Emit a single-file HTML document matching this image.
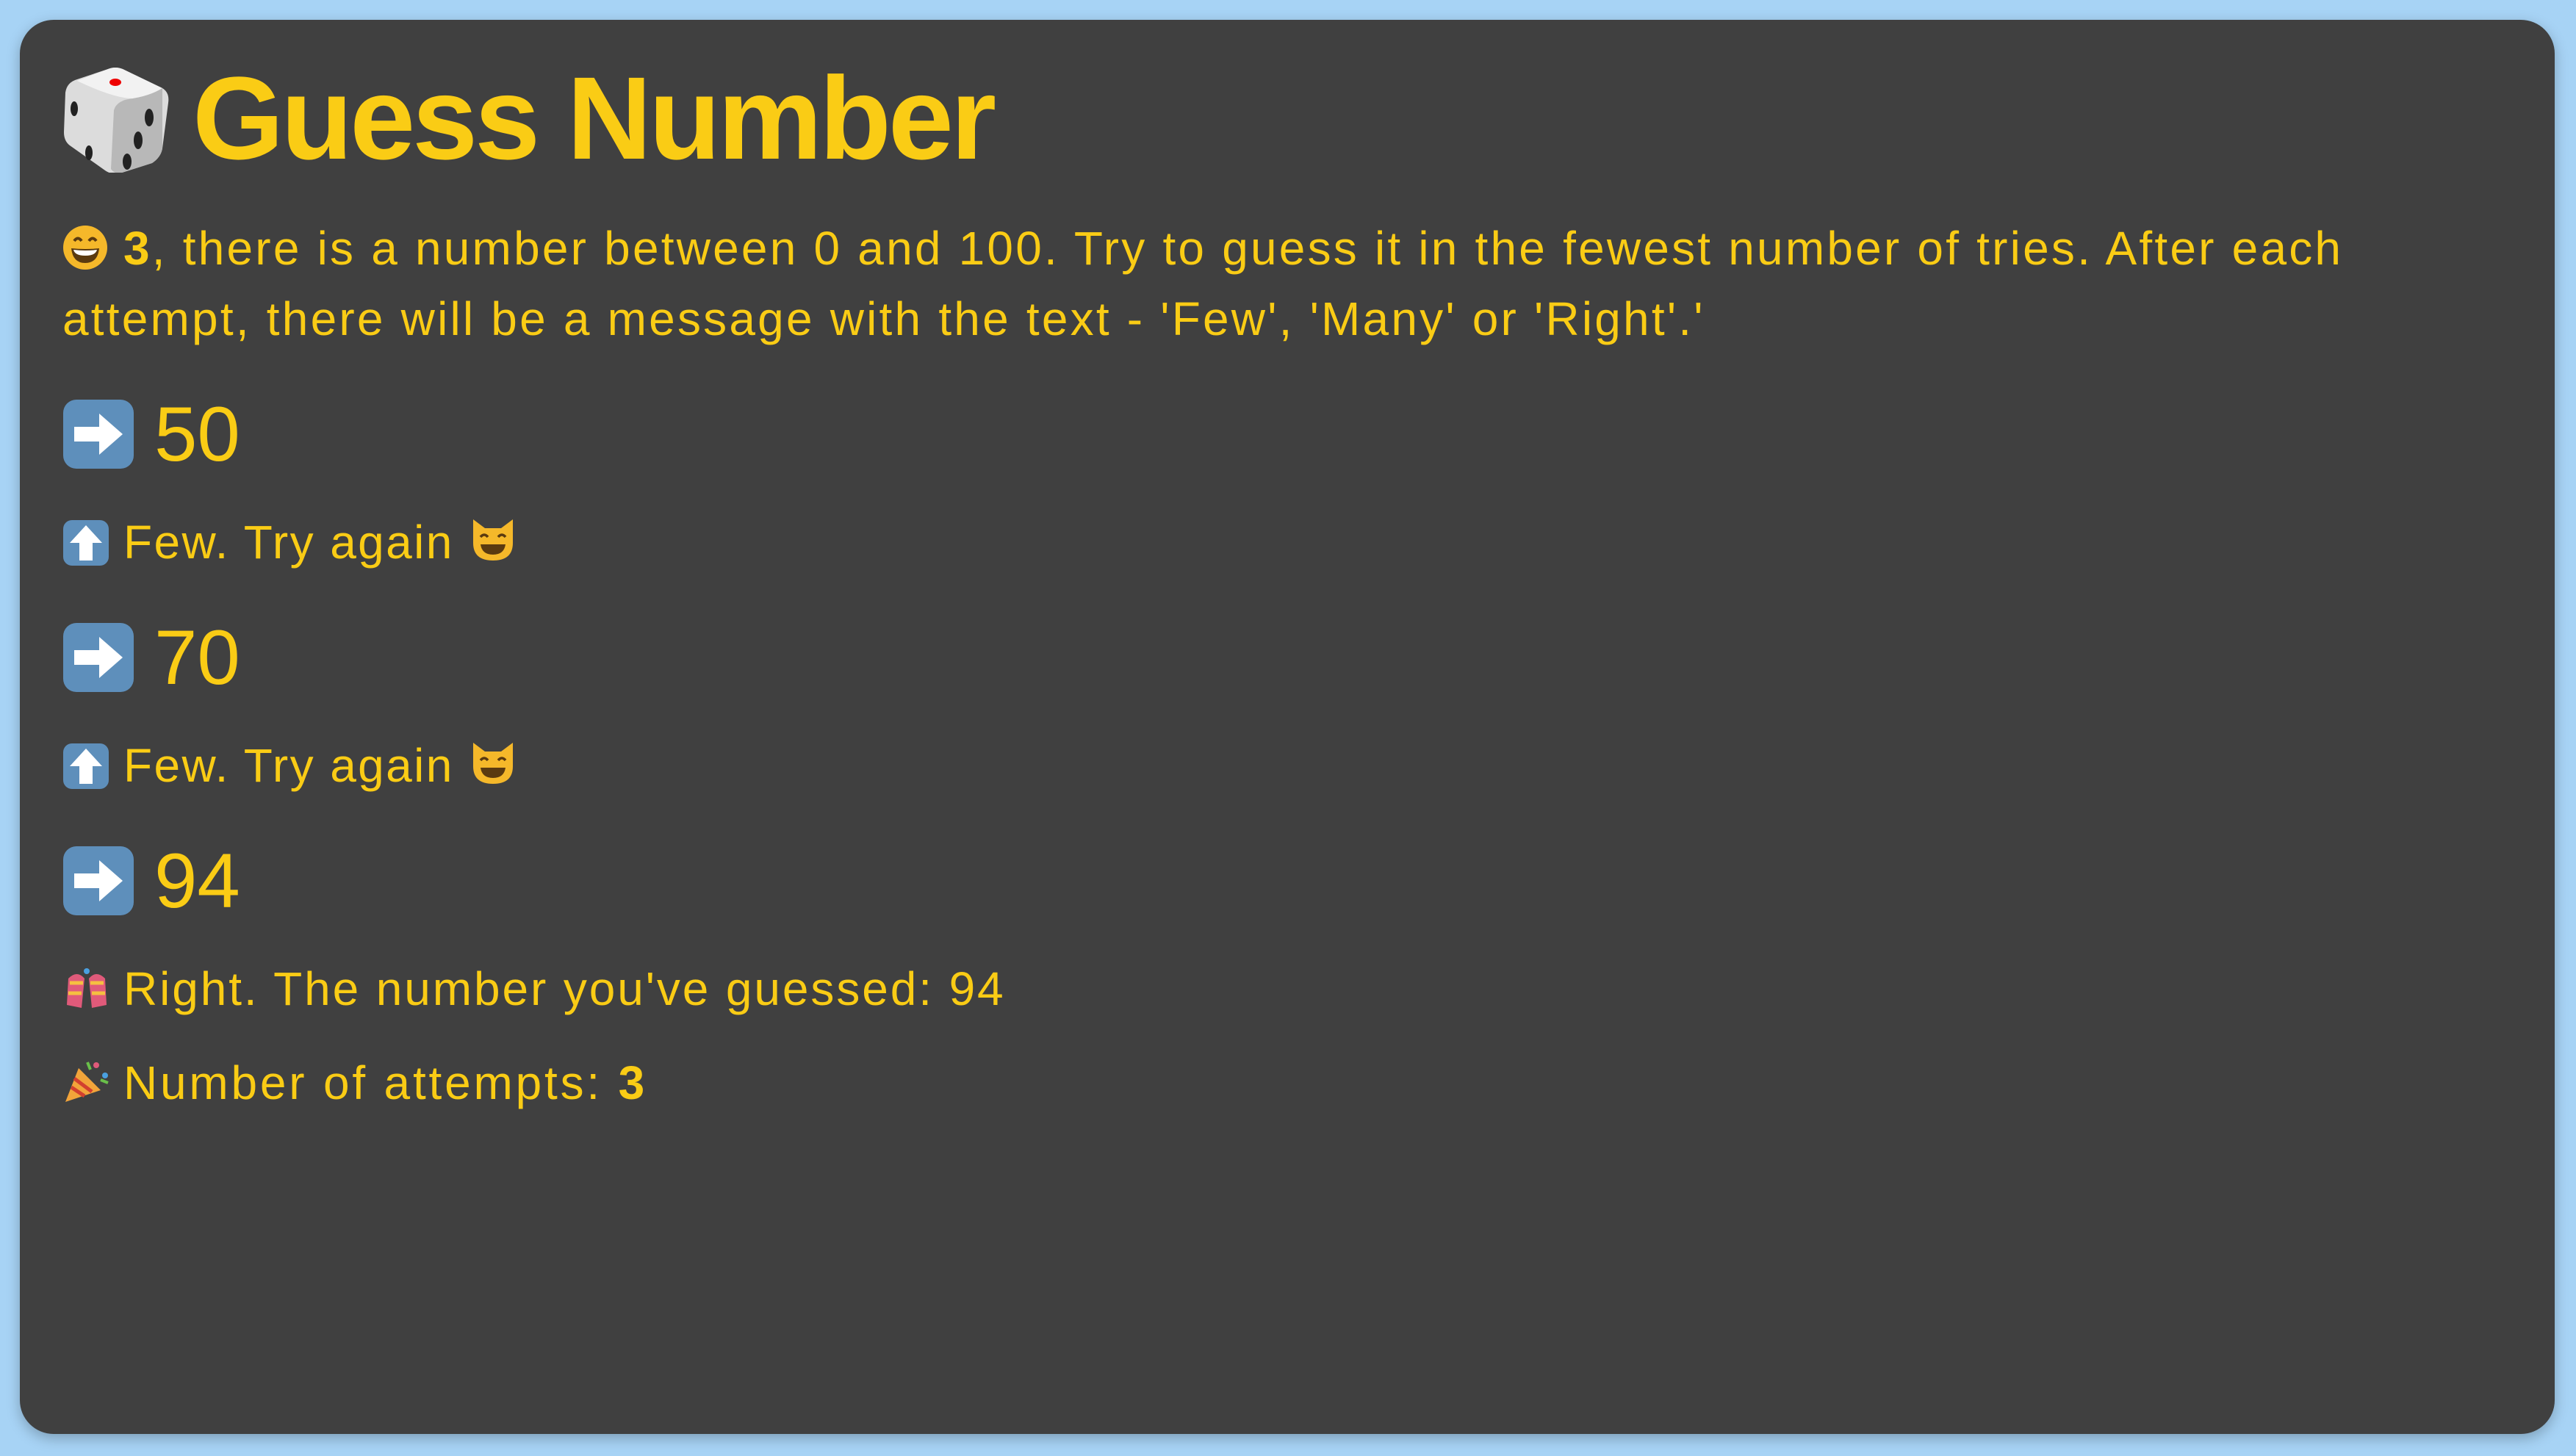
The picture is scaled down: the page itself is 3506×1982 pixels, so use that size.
<!DOCTYPE html>
<html><head><meta charset="utf-8"><style>
html,body{margin:0;padding:0;width:3506px;height:1982px;background:#a7d3f5;overflow:hidden}
.card{position:absolute;left:27px;top:27px;width:3450px;height:1925px;background:#404040;border-radius:46px;box-shadow:0 6px 18px rgba(0,0,0,.25)}
.t{position:absolute;font-family:"Liberation Sans",sans-serif;color:#facc15;white-space:nowrap;line-height:1}
svg{position:absolute}
.t svg{position:static;vertical-align:-8px}
</style></head><body>
<div class="card"></div>

<!-- dice -->
<svg style="left:85px;top:90px" width="145" height="145" viewBox="0 0 145 145">
<path d="M62 4 Q72 0 82 4 L136 30 Q146 36 144 50 L136 112 Q134 124 122 132 L78 146 Q66 148 58 142 L10 108 Q2 102 2 90 L4 36 Q6 22 20 18 Z" fill="#dcdcdc"/>
<path d="M62 4 Q72 0 82 4 L136 30 Q120 40 96 44 Q70 44 20 20 Z" fill="#f2f2f2"/>
<path d="M96 44 Q120 40 136 30 L136 112 Q134 124 122 132 L78 146 Q70 146 66 140 L70 60 Q74 46 96 44Z" fill="#b8b8b8"/>
<ellipse cx="72" cy="22" rx="8" ry="5" fill="#e00"/>
<ellipse cx="118" cy="70" rx="6" ry="12" fill="#222"/>
<ellipse cx="103" cy="101" rx="6" ry="12" fill="#222"/>
<ellipse cx="88" cy="130" rx="6" ry="11" fill="#222"/>
<ellipse cx="16" cy="58" rx="5" ry="10" fill="#222"/>
<ellipse cx="36" cy="118" rx="5" ry="10" fill="#222"/>
</svg>
<div class="t" style="left:262px;top:81px;font-size:160px;font-weight:bold;letter-spacing:-4px">Guess Number</div>

<div class="t" style="left:85px;top:290px;font-size:64px;line-height:96px;white-space:normal;width:3230px;letter-spacing:3.2px"><svg width="62" height="62" viewBox="0 0 62 62"><circle cx="31" cy="31" r="30" fill="#f5b82a"/><path d="M12 32 Q31 34 50 32 Q48 52 31 52 Q14 52 12 32Z" fill="#5a3a10"/><path d="M15 34 Q31 36 47 34 Q45 42 31 42 Q17 42 15 34Z" fill="#fff"/><path d="M16 22 Q21 15 26 22 M36 22 Q41 15 46 22" stroke="#5a3a10" stroke-width="4" fill="none"/></svg> <b>3</b>, there is a number between 0 and 100. Try to guess it in the fewest number of tries. After each attempt, there will be a message with the text - 'Few', 'Many' or 'Right'.'</div>

<!-- rows -->
<svg style="left:85px;top:543px" width="98" height="96" viewBox="0 0 98 96"><rect x="1" y="1" width="96" height="94" rx="18" fill="#5e8fbb"/><path d="M16 38 H50 V20 L82 48 L50 76 V58 H16Z" fill="#fff"/></svg>
<div class="t" style="left:210px;top:539px;font-size:105px">50</div>
<svg style="left:85px;top:707px" width="64" height="64" viewBox="0 0 64 64"><rect x="1" y="1" width="62" height="62" rx="12" fill="#5e8fbb"/><path d="M32 8 L54 32 H41 V56 H23 V32 H10Z" fill="#fff"/></svg>
<div class="t" style="left:168px;top:706px;font-size:64px;letter-spacing:2.4px">Few. Try again</div>
<svg style="left:640px;top:703px" width="62" height="64" viewBox="0 0 62 64"><path d="M4 4 L20 16 L42 16 L58 4 L58 36 Q58 60 31 60 Q4 60 4 36Z" fill="#f5b82a"/><path d="M14 38 H48 Q46 52 31 52 Q16 52 14 38Z" fill="#5a3a10"/><path d="M14 28 Q19 22 24 28 M38 28 Q43 22 48 28" stroke="#5a3a10" stroke-width="3.5" fill="none"/></svg>

<svg style="left:85px;top:847px" width="98" height="96" viewBox="0 0 98 96"><rect x="1" y="1" width="96" height="94" rx="18" fill="#5e8fbb"/><path d="M16 38 H50 V20 L82 48 L50 76 V58 H16Z" fill="#fff"/></svg>
<div class="t" style="left:210px;top:843px;font-size:105px">70</div>
<svg style="left:85px;top:1011px" width="64" height="64" viewBox="0 0 64 64"><rect x="1" y="1" width="62" height="62" rx="12" fill="#5e8fbb"/><path d="M32 8 L54 32 H41 V56 H23 V32 H10Z" fill="#fff"/></svg>
<div class="t" style="left:168px;top:1010px;font-size:64px;letter-spacing:2.4px">Few. Try again</div>
<svg style="left:640px;top:1007px" width="62" height="64" viewBox="0 0 62 64"><path d="M4 4 L20 16 L42 16 L58 4 L58 36 Q58 60 31 60 Q4 60 4 36Z" fill="#f5b82a"/><path d="M14 38 H48 Q46 52 31 52 Q16 52 14 38Z" fill="#5a3a10"/><path d="M14 28 Q19 22 24 28 M38 28 Q43 22 48 28" stroke="#5a3a10" stroke-width="3.5" fill="none"/></svg>

<svg style="left:85px;top:1151px" width="98" height="96" viewBox="0 0 98 96"><rect x="1" y="1" width="96" height="94" rx="18" fill="#5e8fbb"/><path d="M16 38 H50 V20 L82 48 L50 76 V58 H16Z" fill="#fff"/></svg>
<div class="t" style="left:210px;top:1147px;font-size:105px">94</div>
<svg style="left:85px;top:1312px" width="66" height="64" viewBox="0 0 66 64"><path d="M8 20 Q20 8 30 20 L26 60 L6 56Z" fill="#e05a7a"/><path d="M36 20 Q46 8 58 20 L60 56 L40 60Z" fill="#e05a7a"/><path d="M10 26 H28 M38 26 H56 M8 40 H26 M40 40 H58" stroke="#f5c040" stroke-width="5"/><circle cx="33" cy="10" r="4" fill="#4aa0e0"/></svg>
<div class="t" style="left:168px;top:1314px;font-size:64px;letter-spacing:2.9px">Right. The number you've guessed: 94</div>
<svg style="left:85px;top:1440px" width="66" height="64" viewBox="0 0 66 64"><path d="M4 60 L22 14 L52 44Z" fill="#f2a43a"/><path d="M12 40 L30 52 M16 28 L40 46" stroke="#d2402f" stroke-width="5"/><circle cx="46" cy="10" r="4" fill="#e05a7a"/><circle cx="58" cy="24" r="4" fill="#4aa0e0"/><path d="M34 6 L38 16 M52 30 L62 34" stroke="#6ac04a" stroke-width="4"/></svg>
<div class="t" style="left:168px;top:1442px;font-size:64px;letter-spacing:3.8px">Number of attempts: <b>3</b></div>
</body></html>
